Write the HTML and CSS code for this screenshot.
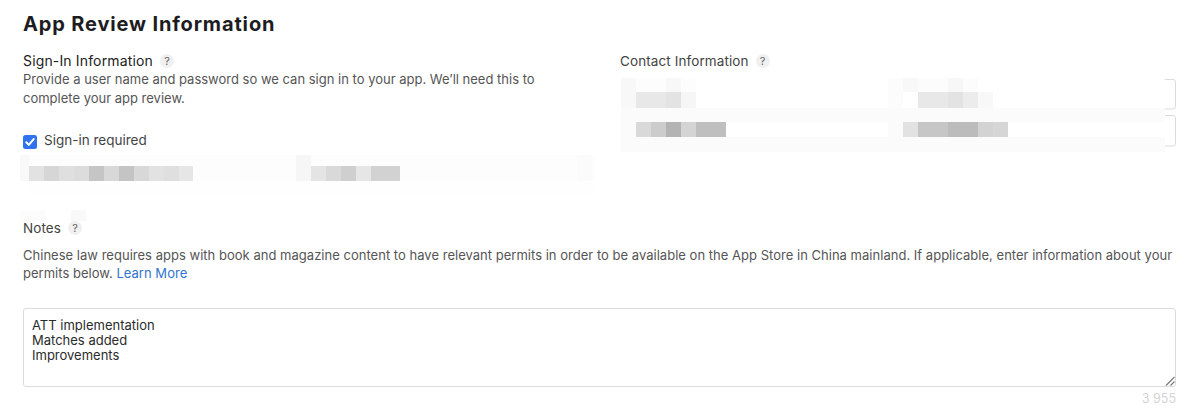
FILE: index.html
```html
<!DOCTYPE html>
<html lang="en">
<head>
<meta charset="utf-8">
<title>App Review Information</title>
<link rel="stylesheet" href="styles.css">
</head>
<body>
<main class="page">
  <h1 class="title">App Review Information</h1>
  <div class="columns">
    <section class="signin">
      <div class="label-row"><h2 class="label label-strong">Sign-In Information</h2><span class="help">?</span></div>
      <p class="desc">Provide a user name and password so we can sign in to your app. We’ll need this to complete your app review.</p>
      <label class="check-row">
        <svg class="check" viewBox="0 0 14 14" width="14" height="14" aria-hidden="true"><rect width="14" height="14" rx="2.5" fill="#2f74ee"/><path d="M3.3 7.3l2.5 2.6 4.9-5.8" fill="none" stroke="#fff" stroke-width="2" stroke-linecap="round" stroke-linejoin="round"/></svg>
        <span class="check-label">Sign-in required</span>
      </label>
      <svg class="mosaic mosaic-left" width="578" height="40" viewBox="0 0 578 40" aria-hidden="true">
        <rect x="3" y="0" width="575" height="26" fill="#fdfdfd"/>
        <rect x="12" y="26" width="565" height="13" fill="#fefefe"/>
        <rect x="3" y="0" width="9" height="26" fill="#f9f9f9"/>
        <rect x="279" y="0" width="15" height="26" fill="#f6f6f6"/>
        <rect x="560" y="0" width="15" height="26" fill="#fbfbfb"/>
        <rect x="12" y="11" width="15" height="15" fill="#e2e2e2"/>
        <rect x="27" y="11" width="15" height="15" fill="#d6d6d6"/>
        <rect x="42" y="11" width="15" height="15" fill="#dfdfdf"/>
        <rect x="57" y="11" width="15" height="15" fill="#dcdcdc"/>
        <rect x="72" y="11" width="15" height="15" fill="#c5c5c5"/>
        <rect x="87" y="11" width="15" height="15" fill="#d8d8d8"/>
        <rect x="102" y="11" width="15" height="15" fill="#c4c4c4"/>
        <rect x="117" y="11" width="15" height="15" fill="#d8d8d8"/>
        <rect x="132" y="11" width="15" height="15" fill="#e2e2e2"/>
        <rect x="147" y="11" width="15" height="15" fill="#dfdfdf"/>
        <rect x="162" y="11" width="14" height="15" fill="#e6e6e6"/>
        <rect x="294" y="11" width="15" height="15" fill="#e4e4e4"/>
        <rect x="309" y="11" width="15" height="15" fill="#d9d9d9"/>
        <rect x="324" y="11" width="15" height="15" fill="#cfcfcf"/>
        <rect x="339" y="11" width="15" height="15" fill="#e6e6e6"/>
        <rect x="354" y="11" width="29" height="15" fill="#d2d2d2"/>
      </svg>
    </section>
    <section class="contact">
      <div class="label-row"><h2 class="label">Contact Information</h2><span class="help">?</span></div>
      <div class="contact-fields">
        <svg class="mosaic" width="556" height="75" viewBox="0 0 556 75" aria-hidden="true">
          <rect x="0" y="30" width="544" height="44" fill="#fbfbfb"/>
          <rect x="0" y="0" width="15" height="30" fill="#f8f8f8"/>
          <rect x="15" y="0" width="60" height="14" fill="#fdfdfd"/>
          <rect x="45" y="0" width="15" height="14" fill="#f8f8f8"/>
          <rect x="15" y="14" width="30" height="16" fill="#e8e8e8"/>
          <rect x="45" y="14" width="15" height="16" fill="#e3e3e3"/>
          <rect x="60" y="14" width="15" height="16" fill="#f6f6f6"/>
          <rect x="267" y="0" width="90" height="14" fill="#fcfcfc"/>
          <rect x="282" y="0" width="15" height="14" fill="#f8f8f8"/>
          <rect x="327" y="0" width="15" height="14" fill="#f7f7f7"/>
          <rect x="267" y="14" width="15" height="16" fill="#fcfcfc"/>
          <rect x="297" y="14" width="45" height="16" fill="#e8e8e8"/>
          <rect x="327" y="14" width="15" height="16" fill="#e3e3e3"/>
          <rect x="342" y="14" width="15" height="16" fill="#ececec"/>
          <rect x="357" y="14" width="15" height="16" fill="#f8f8f8"/>
          <rect x="15" y="44" width="252" height="15" fill="#fff"/>
          <rect x="282" y="44" width="262" height="15" fill="#fff"/>
          <rect x="15" y="44" width="15" height="15" fill="#d9d9d9"/>
          <rect x="30" y="44" width="15" height="15" fill="#cccccc"/>
          <rect x="45" y="44" width="15" height="15" fill="#b3b3b3"/>
          <rect x="60" y="44" width="15" height="15" fill="#d4d4d4"/>
          <rect x="75" y="44" width="30" height="15" fill="#bfbfbf"/>
          <rect x="282" y="44" width="15" height="15" fill="#e2e2e2"/>
          <rect x="297" y="44" width="30" height="15" fill="#c6c6c6"/>
          <rect x="327" y="44" width="30" height="15" fill="#bcbcbc"/>
          <rect x="357" y="44" width="15" height="15" fill="#d3d3d3"/>
          <rect x="372" y="44" width="15" height="15" fill="#d6d6d6"/>
          <path d="M544 1.500h8a2.500 2.500 0 0 1 2.500 2.500v24.500a2.500 2.500 0 0 1-2.500 2.500h-8M544 37.500h8a2.500 2.500 0 0 1 2.500 2.500v25.500a2.500 2.500 0 0 1-2.500 2.500h-8" fill="none" stroke="#dcdcdc"/>
        </svg>
      </div>
    </section>
  </div>
  <svg class="mosaic mosaic-notes" width="70" height="11" viewBox="0 0 70 11" aria-hidden="true"><rect width="25" height="11" fill="#fcfcfc"/><rect x="51" width="15" height="11" fill="#f9f9f9"/></svg>
  <section class="notes">
    <div class="label-row"><h2 class="label">Notes</h2><span class="help">?</span></div>
    <p class="desc notes-desc">Chinese law requires apps with book and magazine content to have relevant permits in order to be available on the App Store in China mainland. If applicable, enter information about your permits below. <a class="link" href="#">Learn More</a></p>
    <div class="textarea">
      <div>ATT implementation</div>
      <div>Matches added</div>
      <div>Improvements</div>
      <svg class="grip" width="10" height="10" viewBox="0 0 10 10" aria-hidden="true"><path d="M1 9.500L9.500 1M5.500 9.500L9.500 5.500" stroke="#777" stroke-width="1.100" fill="none"/></svg>
    </div>
    <div class="count">3 955</div>
  </section>
</main>
</body>
</html>
```
FILE: styles.css
```css
* { box-sizing: border-box; }
html, body { margin: 0; background: #fff; }
body { font-family: Inter, "Liberation Sans", sans-serif; overflow: hidden; }
.page { padding: 12px 25px 0 23px; width: 1200px; height: 418px; }
.title { margin: 0; font-size: 20px; line-height: 24px; font-weight: 700; color: #1d1d1f; letter-spacing: 0.85px; }
.columns { display: grid; grid-template-columns: 597px 1fr; margin-top: 16px; }
.label-row { display: flex; align-items: center; height: 18px; }
.label { margin: 0; font-size: 13.500px; line-height: 18px; font-weight: 400; color: #444; letter-spacing: 0.1px; }
.label-strong { font-size: 14px; letter-spacing: 0.15px; color: #222; }
.help { width: 14px; height: 14px; margin-left: 7px; border-radius: 50%; background: #f0f0f0; color: #666; font-size: 11px; line-height: 14px; text-align: center; }
.desc { margin: 0; font-size: 13px; line-height: 18.600px; color: #555; }
.signin .desc { width: 530px; }
.check-row { display: flex; align-items: center; gap: 7px; margin-top: 24px; height: 18px; }
.check { flex: none; margin-top: 3px; }
.check-label { font-size: 13.500px; color: #444; }
.mosaic { display: block; }
.mosaic-left { margin: 6px 0 0 -6px; }
.contact-fields { margin: 8px 0 0 1px; }
.mosaic-notes { margin: 15px 0 0 -3px; }
.notes .label-row { height: 14px; }
.notes-desc { margin-top: 11px; width: 1152px; line-height: 18.200px; letter-spacing: 0.02px; }
.link { color: #2f74d0; text-decoration: none; }
.textarea { position: relative; margin-top: 25px; width: 1153px; height: 79px; padding: 9px 8px; border: 1.500px solid #dcdcdc; border-radius: 3px; font-size: 13px; line-height: 15.300px; color: #2b2b2b; }
.grip { position: absolute; right: 0; bottom: 0; }
.count { width: 1153px; margin-top: 4px; text-align: right; font-size: 12.500px; line-height: 16px; color: #d4d4d4; }
```
